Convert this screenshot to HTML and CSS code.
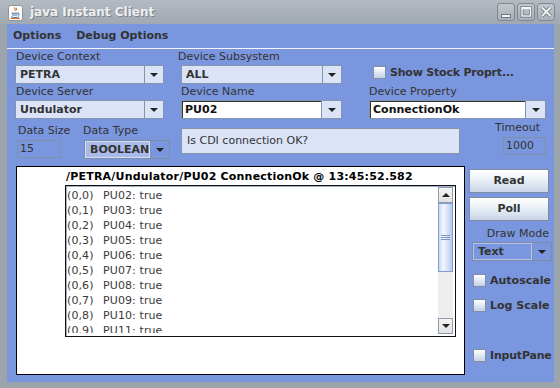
FILE: index.html
```html
<!DOCTYPE html>
<html lang="en">
<head>
    <meta charset="UTF-8">
    <title>java Instant Client</title>
    <link rel="stylesheet" href="styles.css">
</head>
<body>
    <div class="window">
        <div class="titlebar">
            <span class="app-icon">
                <svg width="15" height="16" viewBox="0 0 15 16">
                    <rect x="0.5" y="0.5" width="14" height="15" rx="2" fill="#fbfbfb" stroke="#8d949b"/>
                    <path d="M7 2.5c-1.5 1.2 1.2 1.8 0 3.4M8.6 3c-.9.8.7 1.2 0 2.3" fill="none" stroke="#e4701e" stroke-width="1.1"/>
                    <path d="M3.5 8.2h6.5M4 10h5.5M3 11.8c1.6 1 6.4 1 8 0M10 8.2c1.8 0 1.8 2 0 2" fill="none" stroke="#4a76a8" stroke-width="1"/>
                    <path d="M2.5 13.5h9.5" fill="none" stroke="#e4701e" stroke-width="1"/>
                </svg>
            </span>
            <span class="title">java Instant Client</span>
            <div class="win-buttons">
                <span class="win-btn">
                    <svg width="16" height="16" viewBox="0 0 16 16">
                        <rect x="3.5" y="10.5" width="9" height="3" fill="#f4f5f6" stroke="#6f7780"/>
                    </svg>
                </span>
                <span class="win-btn">
                    <svg width="16" height="16" viewBox="0 0 16 16">
                        <rect x="4" y="3.5" width="8.5" height="8.5" fill="none" stroke="#6f7780" stroke-width="3"/>
                        <rect x="4" y="3.5" width="8.5" height="8.5" fill="none" stroke="#f4f5f6" stroke-width="1.4"/>
                        <rect x="4" y="3.5" width="8.5" height="1.6" fill="#f4f5f6"/>
                    </svg>
                </span>
                <span class="win-btn">
                    <svg width="16" height="16" viewBox="0 0 16 16">
                        <path d="M4 3.5l8.5 8.5M12.5 3.5L4 12" stroke="#6f7780" stroke-width="3.6"/>
                        <path d="M4 3.5l8.5 8.5M12.5 3.5L4 12" stroke="#f4f5f6" stroke-width="1.8"/>
                    </svg>
                </span>
            </div>
        </div>

        <div class="client">
            <div class="menubar">
                <span>Options</span>
                <span>Debug Options</span>
            </div>

            <div class="form-row">
                <div class="col col-1">
                    <div class="label">Device Context</div>
                    <div class="combo"><span class="combo-value">PETRA</span><span class="combo-arrow"></span></div>
                </div>
                <div class="col col-2">
                    <div class="label pull">Device Subsystem</div>
                    <div class="combo"><span class="combo-value">ALL</span><span class="combo-arrow"></span></div>
                </div>
                <div class="col col-3">
                    <div class="label"></div>
                    <div class="check stock"><span class="box"></span>Show Stock Proprt...</div>
                </div>
            </div>

            <div class="form-row">
                <div class="col col-1">
                    <div class="label">Device Server</div>
                    <div class="combo"><span class="combo-value">Undulator</span><span class="combo-arrow"></span></div>
                </div>
                <div class="col col-2">
                    <div class="label">Device Name</div>
                    <div class="combo editable"><span class="combo-value">PU02</span><span class="combo-arrow"></span></div>
                </div>
                <div class="col col-3">
                    <div class="label">Device Property</div>
                    <div class="combo editable"><span class="combo-value">ConnectionOk</span><span class="combo-arrow"></span></div>
                </div>
            </div>

            <div class="form-row data-row">
                <div class="data-size">
                    <div class="label">Data Size</div>
                    <div class="text-field">15</div>
                </div>
                <div class="data-type">
                    <div class="label">Data Type</div>
                    <div class="combo flat focused"><span class="combo-value">BOOLEAN</span><span class="combo-arrow"></span></div>
                </div>
                <div class="description">Is CDI connection OK?</div>
                <div class="timeout">
                    <div class="label">Timeout</div>
                    <div class="text-field">1000</div>
                </div>
            </div>

            <div class="main">
                <div class="panel">
                    <div class="panel-title">/PETRA/Undulator/PU02 ConnectionOk @ 13:45:52.582</div>
                    <div class="list">
                        <div class="list-lines" id="lines"></div>
                        <div class="scrollbar">
                            <div class="sb-btn up"></div>
                            <div class="sb-thumb"><span class="grip"></span></div>
                            <div class="sb-track"></div>
                            <div class="sb-btn down"></div>
                        </div>
                    </div>
                </div>

                <div class="side">
                    <div class="button">Read</div>
                    <div class="button poll">Poll</div>
                    <div class="label draw-label">Draw Mode</div>
                    <div class="combo flat draw-combo"><span class="combo-value">Text</span><span class="combo-arrow"></span></div>
                    <div class="check autoscale"><span class="box"></span>Autoscale</div>
                    <div class="check logscale"><span class="box"></span>Log Scale</div>
                    <div class="check inputpane"><span class="box"></span>InputPane</div>
                </div>
            </div>
        </div>
    </div>

    <script>
        // Fill the result list: one row per undulator
        const lines = document.getElementById('lines');
        for (let i = 0; i < 10; i++) {
            const num = String(i + 2).padStart(2, '0');
            const row = document.createElement('div');
            row.className = 'line';
            row.innerHTML = `<span class="idx">(0,${i})</span>PU${num}: true`;
            lines.appendChild(row);
        }
    </script>
</body>
</html>
```

FILE: styles.css
```css
body {
    margin: 0;
    font-family: "DejaVu Sans", Verdana, sans-serif;
    font-size: 11px;
    color: #333333;
}

.window {
    width: 560px;
    height: 388px;
    background: #9ca4ac;
    display: flex;
    flex-direction: column;
    overflow: hidden;
}

/* title bar */

.titlebar {
    height: 24px;
    flex: none;
    display: flex;
    align-items: center;
    padding-left: 8px;
    background: linear-gradient(#b4bac1, #a0a8b0);
    box-sizing: border-box;
}

.app-icon {
    display: flex;
    margin-top: 1px;
}

.title {
    margin-left: 7px;
    font-size: 12px;
    font-weight: bold;
    color: #eceef0;
    text-shadow: 1px 1px 0 #7d858d;
}

.win-buttons {
    margin-left: auto;
    margin-right: 5px;
    display: flex;
    gap: 2px;
}

.win-btn {
    width: 18px;
    height: 18px;
    box-sizing: border-box;
    border: 1px solid #80888f;
    border-radius: 3px;
    background: linear-gradient(#c2c7cd, #a9b0b7);
    display: flex;
    align-items: center;
    justify-content: center;
}

/* client area */

.client {
    flex: 1;
    margin: 0 6px 6px 7px;
    background: #7a96de;
    display: flex;
    flex-direction: column;
}

.menubar {
    height: 24px;
    line-height: 24px;
    padding-left: 6px;
    display: flex;
    gap: 15px;
    font-weight: bold;
    border-bottom: 1px solid #f4f6fb;
}

.form-row {
    display: flex;
    padding-left: 8px;
    height: 35px;
}

.col-1 { width: 149px; }
.col-2 { width: 161px; margin-left: 17px; }
.col-3 { width: 177px; margin-left: 27px; }

.label {
    height: 16px;
    line-height: 16px;
    white-space: nowrap;
}

.col-1 .label { padding-left: 1px; }
.label.pull { margin-left: -3px; }

/* combo boxes */

.combo {
    height: 19px;
    box-sizing: border-box;
    display: flex;
    border: 1px solid #8494ab;
    background: #dae4f6;
}

.combo-value {
    flex: 1;
    padding-left: 4px;
    line-height: 17px;
    font-weight: bold;
    white-space: nowrap;
    overflow: hidden;
}

.combo-arrow {
    width: 18px;
    border-left: 1px solid #8494ab;
    display: flex;
    align-items: center;
    justify-content: center;
}

.combo-arrow::after {
    content: "";
    border-top: 4px solid #222;
    border-left: 4px solid transparent;
    border-right: 4px solid transparent;
}

.combo.editable {
    background: transparent;
    border: none;
}

.combo.editable .combo-value {
    background: #ffffff;
    border: 1px solid #8494ab;
    box-shadow: inset 1px 1px 0 #333;
    color: #111;
    padding-left: 3px;
}

.combo.editable .combo-arrow {
    width: 19px;
    background: #dae4f6;
    border: 1px solid #8494ab;
    border-left: none;
}

.combo.flat {
    background: transparent;
    border-color: #7d8da6;
}

.combo.flat .combo-value {
    border: 1px solid #b3c3ec;
    line-height: 15px;
}

.combo.focused .combo-value {
    background: #a8baea;
    border-color: #d3ddf4;
}

/* third row */

.data-row {
    height: 47px;
}

.data-size {
    margin-left: 2px;
    width: 44px;
    padding-top: 4px;
}

.data-size .label { padding-left: 1px; }

.text-field {
    height: 18px;
    box-sizing: border-box;
    margin-top: 1px;
    border: 1px solid #8090a6;
    padding-left: 2px;
    line-height: 16px;
}

.data-type {
    margin-left: 22px;
    padding-top: 4px;
}

.data-type .combo {
    margin-left: 1px;
    margin-top: 1px;
    width: 86px;
}

.description {
    margin: 9px 0 0 11px;
    width: 279px;
    height: 26px;
    box-sizing: border-box;
    border: 1px solid #8494ab;
    background: #dae4f6;
    padding-left: 5px;
    line-height: 24px;
}

.timeout {
    margin-left: auto;
    margin-right: 8px;
    width: 53px;
    padding-top: 1px;
    display: flex;
    flex-direction: column;
    align-items: flex-end;
}

.timeout .label {
    padding-right: 6px;
}

.timeout .text-field {
    width: 43px;
}

/* main area */

.main {
    display: flex;
    padding-left: 9px;
}

.panel {
    width: 449px;
    height: 209px;
    box-sizing: border-box;
    border: 1px solid #000;
    background: #ffffff;
    padding-left: 48px;
}

.panel-title {
    padding: 2px 0 0 1px;
    line-height: 16px;
    height: 16px;
    font-weight: bold;
    letter-spacing: 0.2px;
    color: #000;
    white-space: nowrap;
}

.list {
    width: 391px;
    height: 152px;
    box-sizing: border-box;
    border: 1px solid #111;
    box-shadow: inset 1px 1px 0 #a2afc3;
    display: flex;
}

.list-lines {
    flex: 1;
    margin-bottom: 3px;
    padding: 2px 0 0 1px;
    overflow: hidden;
}

.line {
    height: 15px;
    line-height: 15px;
    white-space: nowrap;
    letter-spacing: 0.1px;
    color: #3a3a3a;
}

.idx {
    display: inline-block;
    width: 36px;
}

.scrollbar {
    width: 15px;
    margin: 1px 2px 2px 0;
    display: flex;
    flex-direction: column;
    background: #eeeeee;
}

.sb-btn {
    height: 16px;
    box-sizing: border-box;
    border: 1px solid #8d9cb2;
    background: linear-gradient(#f4f4f4, #e2e2e2);
    display: flex;
    align-items: center;
    justify-content: center;
}

.sb-btn.up::after {
    content: "";
    border-bottom: 4px solid #222;
    border-left: 4px solid transparent;
    border-right: 4px solid transparent;
}

.sb-btn.down::after {
    content: "";
    border-top: 4px solid #222;
    border-left: 4px solid transparent;
    border-right: 4px solid transparent;
}

.sb-thumb {
    height: 69px;
    box-sizing: border-box;
    border: 1px solid #7f9bd0;
    background: linear-gradient(to right, #c9d8f2, #f4f8fe 35%, #dbe6f7 60%, #b7cbee);
    display: flex;
    align-items: center;
    justify-content: center;
}

.grip {
    width: 9px;
    height: 5px;
    background: repeating-linear-gradient(#7f95c4 0, #7f95c4 1px, transparent 1px, transparent 2px);
}

.sb-track {
    flex: 1;
}

/* right column */

.side {
    width: 85px;
    margin-left: 4px;
    padding-top: 3px;
    display: flex;
    flex-direction: column;
}

.button {
    width: 80px;
    height: 24px;
    box-sizing: border-box;
    border: 1px solid #7c8ba0;
    background: linear-gradient(#ffffff, #eaf0f7 45%, #c8d4e5);
    text-align: center;
    line-height: 22px;
    font-weight: bold;
}

.button.poll {
    margin-top: 4px;
}

.draw-label {
    margin-top: 5px;
    text-align: right;
    padding-right: 5px;
}

.draw-combo {
    margin-left: 3px;
    width: 80px;
}

/* check boxes */

.check {
    display: flex;
    align-items: center;
    gap: 4px;
    height: 16px;
    font-weight: bold;
    white-space: nowrap;
}

.check .box {
    width: 13px;
    height: 13px;
    box-sizing: border-box;
    border: 1px solid #7f8fa3;
    background: linear-gradient(#ffffff, #c3d0e6);
}

.check.stock {
    margin-left: 4px;
    margin-top: -1px;
    letter-spacing: -0.2px;
}

.side .check {
    margin-left: 4px;
}

.check.autoscale { margin-top: 11px; }
.check.logscale { margin-top: 9px; }
.check.inputpane { margin-top: 34px; letter-spacing: -0.2px; }
```
